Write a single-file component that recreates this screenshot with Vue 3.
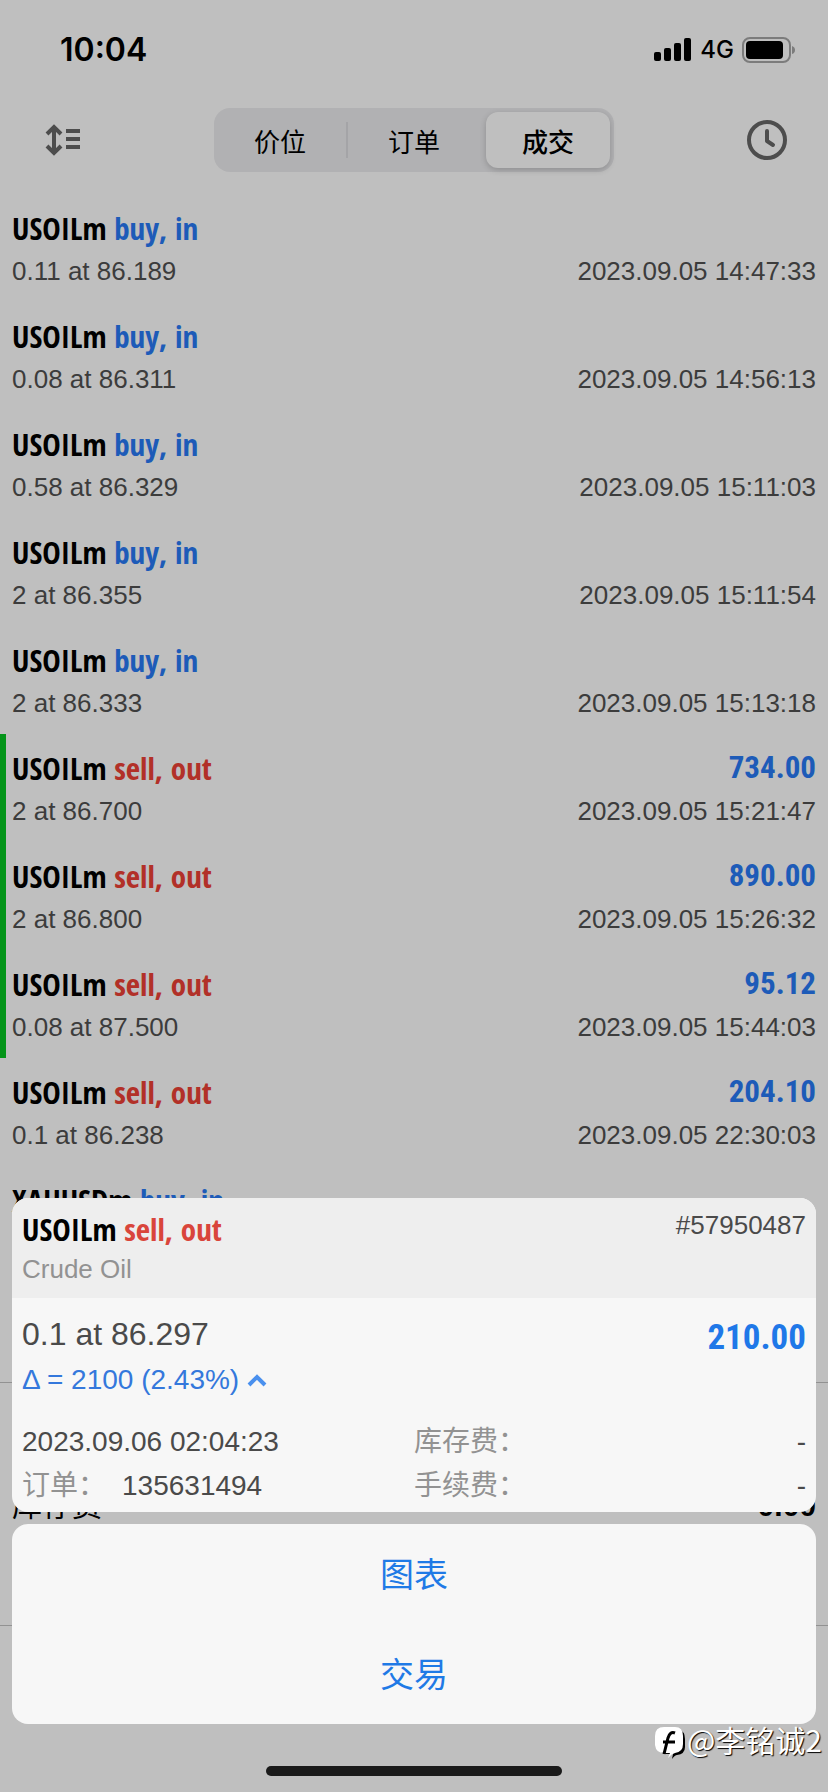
<script setup>
const deals = [
  { symbol: 'USOILm', side: 'buy', type: 'buy, in', detail: '0.11 at 86.189', time: '2023.09.05 14:47:33' },
  { symbol: 'USOILm', side: 'buy', type: 'buy, in', detail: '0.08 at 86.311', time: '2023.09.05 14:56:13' },
  { symbol: 'USOILm', side: 'buy', type: 'buy, in', detail: '0.58 at 86.329', time: '2023.09.05 15:11:03' },
  { symbol: 'USOILm', side: 'buy', type: 'buy, in', detail: '2 at 86.355', time: '2023.09.05 15:11:54' },
  { symbol: 'USOILm', side: 'buy', type: 'buy, in', detail: '2 at 86.333', time: '2023.09.05 15:13:18' },
  { symbol: 'USOILm', side: 'sell', type: 'sell, out', detail: '2 at 86.700', time: '2023.09.05 15:21:47', profit: '734.00', marked: true },
  { symbol: 'USOILm', side: 'sell', type: 'sell, out', detail: '2 at 86.800', time: '2023.09.05 15:26:32', profit: '890.00', marked: true },
  { symbol: 'USOILm', side: 'sell', type: 'sell, out', detail: '0.08 at 87.500', time: '2023.09.05 15:44:03', profit: '95.12', marked: true },
  { symbol: 'USOILm', side: 'sell', type: 'sell, out', detail: '0.1 at 86.238', time: '2023.09.05 22:30:03', profit: '204.10' },
  { symbol: 'XAUUSDm', side: 'buy', type: 'buy, in' },
]
</script>

<template>
  <div class="screen">
    <header class="status">
      <span class="clock">10:04</span>
      <div class="indicators">
        <svg width="38" height="24" viewBox="0 0 38 24" aria-hidden="true">
          <rect x="0" y="14" width="7" height="9" rx="2" />
          <rect x="10" y="10" width="7" height="13" rx="2" />
          <rect x="20" y="5" width="7" height="18" rx="2" />
          <rect x="30" y="0" width="7" height="23" rx="2" />
        </svg>
        <span class="network">4G</span>
        <svg width="54" height="26" viewBox="0 0 54 26" aria-hidden="true">
          <rect x="1" y="1" width="47" height="24" rx="7" fill="none" stroke="#7c7c7c" stroke-width="2" />
          <rect x="4" y="4" width="37" height="18" rx="4" />
          <path d="M50 9q3 1 3 4t-3 4z" fill="#7c7c7c" />
        </svg>
      </div>
    </header>

    <nav class="toolbar">
      <button class="icon-button" aria-label="排序">
        <svg width="36" height="32" viewBox="0 0 36 32" fill="none" stroke="#4d4d4d" stroke-width="4" aria-hidden="true">
          <path d="M9 3v26M2 10l7-7 7 7M2 22l7 7 7-7M21 7h14M21 15h14M21 23h14" />
        </svg>
      </button>
      <div class="segments">
        <button class="segment">价位</button>
        <span class="divider"></span>
        <button class="segment">订单</button>
        <button class="segment active">成交</button>
      </div>
      <button class="icon-button" aria-label="历史">
        <svg width="40" height="40" viewBox="0 0 40 40" fill="none" stroke="#4d4d4d" stroke-width="4" aria-hidden="true">
          <circle cx="20" cy="20" r="18" />
          <path d="M20 11v10l6 4" stroke-linecap="round" stroke-linejoin="round" />
        </svg>
      </button>
    </nav>

    <main>
      <ul class="deals">
        <li v-for="(deal, i) in deals" :key="i" class="deal" :class="{ marked: deal.marked }">
          <div class="line title">
            <span>{{ deal.symbol }} <span :class="deal.side">{{ deal.type }}</span></span>
            <span v-if="deal.profit" class="profit">{{ deal.profit }}</span>
          </div>
          <div v-if="deal.detail" class="line detail">
            <span>{{ deal.detail }}</span>
            <span>{{ deal.time }}</span>
          </div>
        </li>
      </ul>
      <section class="totals">
        <div class="total"><span>库存费</span><b>0.00</b></div>
      </section>
    </main>

    <div class="sheet">
      <section class="card">
        <header class="card-head">
          <div class="line title">
            <span>USOILm <span class="sell">sell, out</span></span>
            <span class="ticket">#57950487</span>
          </div>
          <div class="caption">Crude Oil</div>
        </header>
        <div class="card-body">
          <div class="line price">
            <span>0.1 at 86.297</span>
            <strong class="result">210.00</strong>
          </div>
          <div class="delta">
            <span>Δ = 2100 (2.43%)</span>
            <svg width="20" height="14" viewBox="0 0 20 14" fill="none" stroke="#4a90ee" stroke-width="4" aria-hidden="true">
              <path d="M2 12l8-8 8 8" />
            </svg>
          </div>
          <div class="facts">
            <span>2023.09.06 02:04:23</span>
            <span class="line"><span class="label">库存费：</span><span>-</span></span>
            <span class="order"><span class="label">订单：</span><span>135631494</span></span>
            <span class="line"><span class="label">手续费：</span><span>-</span></span>
          </div>
        </div>
      </section>
      <div class="actions">
        <button class="action">图表</button>
        <button class="action">交易</button>
      </div>
    </div>

    <div class="watermark">
      <svg width="32" height="34" viewBox="0 0 32 34" aria-hidden="true">
        <path d="M11 3h12q7 2 7 10v8q0 7-8 8-2 0-5 4l1-5H11q-8-1-8-9v-6q0-9 8-10z" fill="#000" />
        <path d="M9 1h11q8 0 8 9v8q0 8-8 9-4 1-7 5l2-5H9q-8 0-9-8v-9Q0 1 9 1z" fill="#fff" />
        <path d="M20 7q-5-2-7 5l-4 16M8 16h12" fill="none" stroke="#000" stroke-width="3" />
      </svg>
      <span>@李铭诚2</span>
    </div>
    <div class="home-bar"></div>
  </div>
</template>

<style>
body {
  background: #bfbfbf;
}
</style>

<style scoped>
.screen {
  position: relative;
  box-sizing: border-box;
  min-height: 100vh;
  background: #bfbfbf;
  color: #000;
  font-family: "Liberation Sans", "Noto Sans CJK SC", sans-serif;
}
button {
  padding: 0;
  border: 0;
  background: none;
  color: inherit;
  font: inherit;
}
svg {
  display: block;
}
.status {
  display: flex;
  justify-content: space-between;
  align-items: center;
  height: 100px;
  padding: 0 32px 0 60px;
}
.clock {
  font: 600 32px/40px Inter, sans-serif;
}
.indicators {
  display: flex;
  align-items: center;
  gap: 8px;
}
.network {
  font: 500 24px/28px Inter, sans-serif;
}
.toolbar {
  display: flex;
  justify-content: space-between;
  align-items: center;
  height: 80px;
  padding: 0 41px 0 45px;
}
.icon-button {
  display: flex;
}
.segments {
  display: flex;
  align-items: center;
  box-sizing: border-box;
  width: 400px;
  height: 64px;
  padding: 4px 4px 4px 0;
  border-radius: 16px;
  background: #b1b1b3;
}
.segment {
  flex: 1;
  height: 56px;
  font-size: 26px;
}
.segment.active {
  flex: 0 0 124px;
  margin-left: 6px;
  border-radius: 12px;
  background: #bfbfbf;
  box-shadow: 0 2px 6px rgba(0, 0, 0, 0.2);
  font-weight: 500;
}
.divider {
  width: 2px;
  height: 36px;
  background: #a4a4a7;
}
.deals {
  margin: 0;
  padding: 14px 0 108px;
  list-style: none;
}
.deal {
  box-sizing: border-box;
  height: 108px;
  padding: 14px 12px 0 6px;
  border-left: 6px solid transparent;
}
.deal.marked {
  border-left-color: #049419;
}
.line {
  display: flex;
  justify-content: space-between;
}
.title {
  font: 700 31px/40px "Open Sans Condensed", "Liberation Sans", sans-serif;
}
.detail {
  margin-top: 8px;
  color: #3c3c3c;
  font-size: 26px;
  line-height: 30px;
}
.buy,
.profit {
  color: #1d5bb8;
}
.profit {
  font-family: "Roboto Condensed", Roboto, sans-serif;
}
.sell {
  color: #b23028;
}
.totals {
  box-sizing: border-box;
  height: 244px;
  padding: 101px 12px 0;
  border-top: 1px solid #929292;
  border-bottom: 1px solid #929292;
}
.total {
  display: flex;
  justify-content: space-between;
  font-size: 30px;
  line-height: 44px;
}
.sheet {
  position: absolute;
  right: 12px;
  bottom: 68px;
  left: 12px;
  display: flex;
  flex-direction: column;
  gap: 12px;
}
.card {
  overflow: hidden;
  border-radius: 16px;
  background: #f7f7f7;
}
.card-head {
  padding: 11px 10px 13px;
  background: #eee;
}
.card-head .sell {
  color: #d9453b;
}
.ticket {
  color: #4a4a4a;
  font: 400 26px/32px "Liberation Sans", sans-serif;
}
.caption {
  margin-top: 4px;
  color: #929292;
  font-size: 26px;
  line-height: 32px;
}
.card-body {
  padding: 14px 10px 4px;
  color: #4a4a4a;
}
.price {
  font-size: 32px;
  line-height: 44px;
}
.result {
  margin-top: 4px;
  color: #1f78e8;
  font: 700 35px/44px "Roboto Condensed", Roboto, sans-serif;
}
.delta {
  display: flex;
  align-items: center;
  gap: 8px;
  color: #3478dc;
  font-size: 28px;
  line-height: 40px;
}
.facts {
  display: grid;
  grid-template-columns: 1fr 1fr;
  margin-top: 20px;
  font-size: 28px;
  line-height: 44px;
}
.label {
  color: #929292;
}
.order {
  display: flex;
  gap: 16px;
}
.actions {
  display: flex;
  flex-direction: column;
  border-radius: 16px;
  background: #f7f7f7;
}
.action {
  height: 100px;
  padding-bottom: 4px;
  color: #1f7ae6;
  font-size: 34px;
}
.watermark {
  position: absolute;
  right: 6px;
  bottom: 31px;
  display: flex;
  align-items: center;
  color: #fff;
  font: 400 30px/44px "Noto Sans CJK SC", sans-serif;
  text-shadow: 1px 1px 1px #000;
}
.watermark svg {
  margin-top: 8px;
}
.home-bar {
  position: absolute;
  bottom: 16px;
  left: 50%;
  width: 296px;
  height: 10px;
  margin-left: -148px;
  border-radius: 5px;
  background: #1a1a1a;
}
</style>
